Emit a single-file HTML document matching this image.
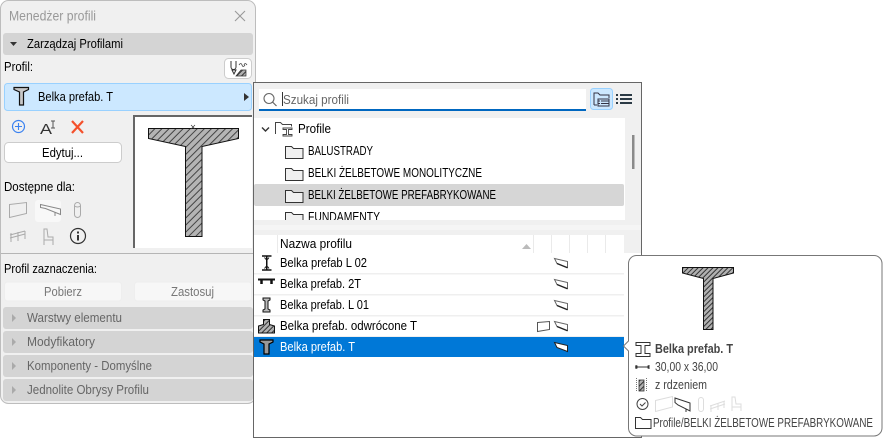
<!DOCTYPE html>
<html><head><meta charset="utf-8"><style>
html,body{margin:0;padding:0;background:#fff;width:883px;height:438px;overflow:hidden}
svg{display:block;font-family:"Liberation Sans",sans-serif;font-size:12.5px}
</style></head><body>
<svg width="883" height="438" viewBox="0 0 883 438" xmlns="http://www.w3.org/2000/svg">
<defs>
<pattern id="h" width="5" height="5" patternUnits="userSpaceOnUse" patternTransform="rotate(45)"><rect width="5" height="5" fill="#b4b4b4"/><rect width="1" height="5" fill="#444"/></pattern>
<pattern id="h2" width="3.500" height="3.500" patternUnits="userSpaceOnUse" patternTransform="rotate(45)"><rect width="3.500" height="3.500" fill="#b0b0b0"/><rect width="1" height="3.500" fill="#333"/></pattern>
<g id="beam" fill="none"><path d="M554.500 258.500L567.500 261.500V267.500L557 263.500Z" stroke="#666"/><path d="M557 263.500L567.500 267.800" stroke="#222" stroke-width="1.300"/></g>
<path id="fold" d="M285.500 158.500V146.500h6l2 2h9.500v10z" fill="#f0f0f0" stroke="#333"/>
<clipPath id="tree"><rect x="254" y="118" width="371" height="102"/></clipPath>
</defs>
<!-- left panel -->
<rect x="0.500" y="0.500" width="255" height="403" rx="8" fill="#f0f0f0" stroke="#bdbdbd"/>
<text x="9" y="20.500" font-size="13.500" fill="#999" textLength="87" lengthAdjust="spacingAndGlyphs">Menedżer profili</text>
<path d="M235 11l10 10M245 11l-10 10" stroke="#999" stroke-width="1.100" fill="none"/>
<rect x="3" y="33" width="250" height="22" rx="3" fill="#d4d4d4"/>
<path d="M10 42h7l-3.500 4z" fill="#333"/>
<text x="27" y="48" fill="#000" textLength="96" lengthAdjust="spacingAndGlyphs">Zarządzaj Profilami</text>
<text x="4" y="71" fill="#000" textLength="29" lengthAdjust="spacingAndGlyphs">Profil:</text>
<rect x="224.500" y="58.500" width="27" height="20" rx="4" fill="#fff" stroke="#ccc"/>
<path d="M231 61v6a2.500 2.500 0 0 0 5 0v-6M232 70l2 4 2-4z" fill="none" stroke="#333"/>
<path d="M236 76l5-6h5v6z" fill="url(#h2)" stroke="#333" stroke-width=".7"/>
<path d="M239 65q2-3 3 0t3 0M244 65q1-3 3 0" fill="none" stroke="#444" stroke-width=".8"/>
<rect x="4.500" y="83.500" width="247" height="27" rx="3" fill="#cce8ff" stroke="#99d1ff"/>
<path d="M14 87.500h14.500v2l-5 2.500v13h-4V92l-5.500-2.500z" fill="#c8c8c8" stroke="#111" stroke-width="1.200"/>
<text x="38" y="101" fill="#000" textLength="75" lengthAdjust="spacingAndGlyphs">Belka prefab. T</text>
<path d="M244 93l5 4-5 4z" fill="#333"/>
<!-- action icons -->
<circle cx="18.500" cy="126.500" r="6" fill="none" stroke="#3b82f0" stroke-width="1.200"/>
<path d="M15 126.500h7M18.500 123v7" stroke="#3b82f0" stroke-width="1.100"/>
<text x="40" y="134" font-size="15" fill="#333" textLength="12" lengthAdjust="spacingAndGlyphs">A</text>
<path d="M51 121h4M53 121v7M51 128h4" stroke="#555" fill="none"/>
<path d="M72 121l11 12M83 121l-11 12" stroke="#f4512c" stroke-width="2.200" fill="none"/>
<rect x="4.500" y="142.500" width="117" height="20" rx="4" fill="#fff" stroke="#ccc"/>
<text x="42" y="157" fill="#000" textLength="41" lengthAdjust="spacingAndGlyphs">Edytuj...</text>
<!-- preview -->
<rect x="133" y="115" width="119" height="133" fill="#fff"/>
<path d="M134 248V116H252" fill="none" stroke="#666" stroke-width="2"/>
<path d="M148.500 128.500H238.500V138.500L202 146.500V236.500H185.500V146.500L148.500 138.500Z" fill="url(#h)" stroke="#111"/>
<path d="M191 125l4 4M195 125l-4 4" stroke="#333" stroke-width=".7"/>
<text x="4" y="191" fill="#000" textLength="71" lengthAdjust="spacingAndGlyphs">Dostępne dla:</text>
<rect x="35" y="200" width="26" height="22" rx="3" fill="#f8f8f8"/>
<path d="M9.500 204.500L26.500 202.500V213.500L9.500 217.500Z" fill="none" stroke="#aaa"/>
<path d="M40.500 204.500L60.500 209V214.500L45.500 208.500L40.500 207.500ZM55 212V216" fill="none" stroke="#888"/>
<rect x="74.500" y="202.500" width="6" height="15" rx="3" fill="none" stroke="#aaa"/>
<path d="M74.500 206q3 2 6 0" fill="none" stroke="#aaa"/>
<path d="M10 235l15-4M10 238l15-4M11 233v9M18 232v9M25 231v8" fill="none" stroke="#aaa"/>
<path d="M44 229h3l1 8h5v3h-9zM44 240v5M53 240v5" fill="none" stroke="#aaa"/>
<circle cx="78" cy="236" r="7.500" fill="none" stroke="#333" stroke-width="1.200"/>
<rect x="77" y="235" width="2" height="5.500" fill="#333"/><rect x="77" y="231.500" width="2" height="2" fill="#333"/>
<rect x="1" y="253" width="254" height="1" fill="#b5b5b5"/>
<text x="4" y="273" fill="#000" textLength="93" lengthAdjust="spacingAndGlyphs">Profil zaznaczenia:</text>
<rect x="4.500" y="282" width="117" height="19" rx="3" fill="#f7f7f7" stroke="#eee"/>
<text x="44" y="296" fill="#777" textLength="38" lengthAdjust="spacingAndGlyphs">Pobierz</text>
<rect x="134.500" y="282" width="117" height="19" rx="3" fill="#f7f7f7" stroke="#eee"/>
<text x="171" y="296" fill="#777" textLength="43" lengthAdjust="spacingAndGlyphs">Zastosuj</text>
<g fill="#d4d4d4">
<rect x="3" y="307" width="250" height="22" rx="3"/><rect x="3" y="331" width="250" height="22" rx="3"/>
<rect x="3" y="355" width="250" height="22" rx="3"/><rect x="3" y="379" width="250" height="22" rx="3"/></g>
<g fill="#aaa"><path d="M12 314l4 4-4 4z"/><path d="M12 338l4 4-4 4z"/><path d="M12 362l4 4-4 4z"/><path d="M12 386l4 4-4 4z"/></g>
<g fill="#666">
<text x="27" y="322" textLength="95" lengthAdjust="spacingAndGlyphs">Warstwy elementu</text>
<text x="27" y="346" textLength="68" lengthAdjust="spacingAndGlyphs">Modyfikatory</text>
<text x="27" y="370" textLength="125" lengthAdjust="spacingAndGlyphs">Komponenty - Domyślne</text>
<text x="27" y="394" textLength="122" lengthAdjust="spacingAndGlyphs">Jednolite Obrysy Profilu</text></g>
<!-- dropdown -->
<rect x="253.500" y="82.500" width="388" height="355" fill="#f0f0f0" stroke="#666"/>
<rect x="259" y="89" width="327" height="20" fill="#fff"/>
<rect x="259" y="109" width="327" height="2" fill="#0067c0"/>
<circle cx="269" cy="98.500" r="5" fill="none" stroke="#666" stroke-width="1.100"/>
<path d="M272.500 102l4 4" stroke="#666" stroke-width="1.200"/>
<rect x="282" y="92" width="1" height="14" fill="#333"/>
<text x="283" y="104" fill="#666" textLength="66" lengthAdjust="spacingAndGlyphs">Szukaj profili</text>
<rect x="590.500" y="88.500" width="22" height="21" rx="3" fill="#cce8ff" stroke="#99d1ff"/>
<path d="M594 105V93h4l2 2h9v3M594 105h3" fill="none" stroke="#334"/>
<path d="M598 99h11v7h-11zM601 101h8M601 103.500h8M598 101h2M598 103.500h2" fill="none" stroke="#334"/>
<path d="M616 94h2v2h-2zM616 98h2v2h-2zM616 102h2v2h-2z" fill="#2b3a45"/>
<path d="M620 95h12M620 99h12M620 103h12" stroke="#2b3a45" stroke-width="2"/>
<rect x="254" y="118" width="371" height="102" fill="#fff"/>
<rect x="632" y="135" width="2.500" height="34" fill="#8a8a8a"/>
<rect x="254" y="184" width="370" height="22" rx="2" fill="#d6d6d6"/>
<path d="M262 127.500l3.500 3.500 3.500-3.500" fill="none" stroke="#333" stroke-width="1.400"/>
<path d="M275.500 134V122.500h5l2 2h9v2" fill="none" stroke="#444"/>
<path d="M283 128h9v1.500h-3.500v5h3.500v1.500h-9v-1.500h3.500v-5H283z" fill="#fff" stroke="#444" stroke-width=".9"/>
<text x="298" y="133" fill="#000" textLength="33" lengthAdjust="spacingAndGlyphs">Profile</text>
<use href="#fold"/>
<use href="#fold" y="22"/>
<use href="#fold" y="44"/>
<g clip-path="url(#tree)"><use href="#fold" y="66"/>
<text x="308" y="221" fill="#000" textLength="72" lengthAdjust="spacingAndGlyphs">FUNDAMENTY</text></g>
<text x="308" y="155" fill="#000" textLength="65" lengthAdjust="spacingAndGlyphs">BALUSTRADY</text>
<text x="308" y="177" fill="#000" textLength="174" lengthAdjust="spacingAndGlyphs">BELKI ŻELBETOWE MONOLITYCZNE</text>
<text x="308" y="199" fill="#000" textLength="188" lengthAdjust="spacingAndGlyphs">BELKI ŻELBETOWE PREFABRYKOWANE</text>
<rect x="254" y="225" width="387" height="5" fill="#f5f5f5"/>
<rect x="254" y="235" width="370" height="18" fill="#fff"/>
<path d="M277.500 235v18M533.500 235v18M551.500 235v18M569.500 235v18M587.500 235v18M605.500 235v18" stroke="#eaeaea"/>
<text x="280" y="248" fill="#000" textLength="72" lengthAdjust="spacingAndGlyphs">Nazwa profilu</text>
<path d="M522 249l4.500-5 4.500 5z" fill="#bbb"/>
<rect x="254" y="253" width="387" height="184" fill="#fff"/>
<rect x="254" y="273" width="370" height="1.500" fill="#efefef"/>
<rect x="254" y="294" width="370" height="1.500" fill="#efefef"/>
<rect x="254" y="315" width="370" height="1.500" fill="#efefef"/>
<rect x="254" y="336" width="370" height="1.500" fill="#efefef"/>
<rect x="254" y="337" width="370" height="20" fill="#0078d7"/>
<rect x="253" y="82" width="1" height="356" fill="#666"/>
<rect x="641" y="82" width="1" height="356" fill="#666"/>
<rect x="253" y="437" width="389" height="1" fill="#666"/>
<!-- row icons -->
<path d="M262 256h9.500M262 270h9.500M266.750 256v14" fill="none" stroke="#111" stroke-width="1.500"/>
<path d="M264.500 257.500l1.500 2M269 257.500l-1.500 2M264.500 268.500l1.500-2M269 268.500l-1.500-2" stroke="#111"/>
<path d="M258 279.500h17" stroke="#111" stroke-width="2"/><path d="M261.500 280v4M271.500 280v4" stroke="#111" stroke-width="2.500"/>
<path d="M263 298h7v2l-2 1v8l2 1v2h-7v-2l2-1v-8l-2-1z" fill="#bbb" stroke="#111"/>
<path d="M258.500 333v-7l5-1.500v-5h6v5l5 1.500v7z" fill="url(#h2)" stroke="#111"/>
<path d="M260 340h13v2l-4 2v10h-5v-10l-4-2z" fill="#999" stroke="#000" stroke-width="1.200"/>
<g fill="#000">
<text x="280" y="267" textLength="87" lengthAdjust="spacingAndGlyphs">Belka prefab L 02</text>
<text x="280" y="288" textLength="81" lengthAdjust="spacingAndGlyphs">Belka prefab. 2T</text>
<text x="280" y="309" textLength="89" lengthAdjust="spacingAndGlyphs">Belka prefab. L 01</text>
<text x="280" y="330" textLength="137" lengthAdjust="spacingAndGlyphs">Belka prefab. odwrócone T</text></g>
<text x="280" y="351" fill="#fff" textLength="75" lengthAdjust="spacingAndGlyphs">Belka prefab. T</text>
<use href="#beam"/><use href="#beam" y="21"/><use href="#beam" y="42"/><use href="#beam" y="63"/>
<path d="M554.500 342.500L567.500 345.500V351.500L557 347.500Z" fill="#fff" stroke="#222"/>
<path d="M537.500 322.500L549.500 321.500V329.500L537.500 331.500Z" fill="none" stroke="#555"/>
<!-- tooltip -->
<path d="M636.500 255.500H874a8 8 0 0 1 8 8V428a8 8 0 0 1-8 8H636.500a8 8 0 0 1-8-8V351l-5-5 5-5V263.500a8 8 0 0 1 8-8Z" fill="#fff" stroke="#777"/>
<path d="M682.500 267.500H733.500V273L713 278.500V329.500H703.500V278.500L682.500 273Z" fill="url(#h2)" stroke="#111"/>
<path d="M636 342.500h14v3h-5v8h5v3h-14v-3h5v-8h-5z" fill="none" stroke="#333"/>
<text x="655" y="353" font-weight="bold" fill="#444" textLength="78" lengthAdjust="spacingAndGlyphs">Belka prefab. T</text>
<path d="M635 367h14" stroke="#333"/><path d="M636 365v4M649 365v4M637 365.500v3M648 365.500v3" stroke="#333"/>
<text x="655" y="371" fill="#444" textLength="63" lengthAdjust="spacingAndGlyphs">30,00 x 36,00</text>
<rect x="639" y="380" width="5" height="11" fill="url(#h2)" stroke="#333" stroke-width=".8"/>
<path d="M636.500 378v14M646.500 378v14" stroke="#777" stroke-dasharray="1 1"/>
<text x="655" y="389" fill="#444" textLength="52" lengthAdjust="spacingAndGlyphs">z rdzeniem</text>
<circle cx="642.500" cy="404" r="5.500" fill="none" stroke="#444"/>
<path d="M640 404l2 2 3.500-3.500" fill="none" stroke="#444"/>
<path d="M655.500 400.500L672.500 396.500V407L655.500 411.500Z" fill="none" stroke="#ddd"/>
<path d="M675 398L690 403V411L678 405L675 402.500ZM686 409v3" fill="none" stroke="#333"/>
<rect x="698.500" y="397.500" width="5" height="14" rx="2.500" fill="none" stroke="#ddd"/>
<path d="M710 406l15-5M710 409l15-5M711 405v7M718 403v7M724 401v7" fill="none" stroke="#ddd"/>
<path d="M732 397h3l1 7h5v3h-9zM732 407v4M741 407v4" fill="none" stroke="#ddd"/>
<path d="M635.500 428.500V417.500h5l2 2h8.500v9z" fill="none" stroke="#333"/>
<text x="653" y="427" fill="#444" textLength="220" lengthAdjust="spacingAndGlyphs">Profile/BELKI ŻELBETOWE PREFABRYKOWANE</text>
</svg>
</body></html>
